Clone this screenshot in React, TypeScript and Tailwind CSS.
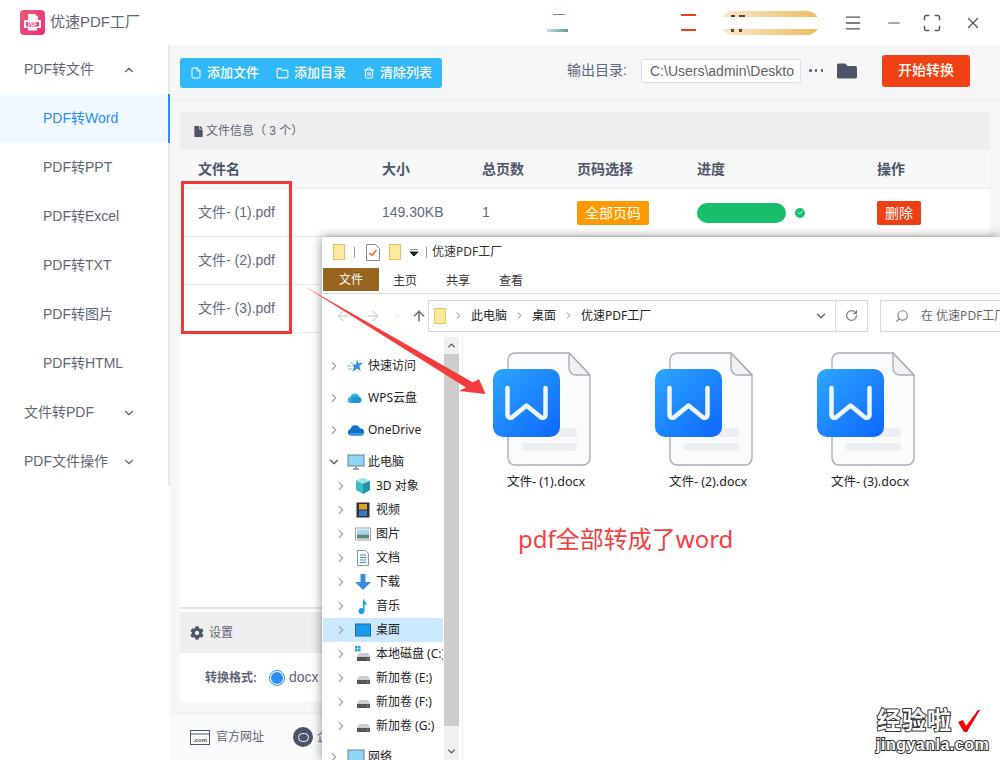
import React from 'react';
import { ChevronUp, ChevronDown, ChevronRight, Menu, Minus, Maximize, X, File, Folder, Trash2, Check, RotateCw, Search, ArrowLeft, ArrowRight, ArrowUp } from 'lucide-react';
import { FaCog, FaFile, FaFolder } from 'react-icons/fa';

const subMenu = ['PDF转Word', 'PDF转PPT', 'PDF转Excel', 'PDF转TXT', 'PDF转图片', 'PDF转HTML'];
const files = ['文件- (1).pdf', '文件- (2).pdf', '文件- (3).pdf'];
const docs = ['文件- (1).docx', '文件- (2).docx', '文件- (3).docx'];

const Logo = () => (
  <div className="w-[25px] h-[25px] rounded-[4px] bg-gradient-to-br from-[#f0566f] to-[#ea2d7f] flex items-center justify-center">
    <svg width="19" height="19" viewBox="0 0 19 19">
      <path d="M5 1h7l3 3v4H5z" fill="#fff" />
      <rect x="1" y="7" width="17" height="8" rx="1" fill="#fff" />
      <rect x="3" y="9" width="13" height="4.5" fill="#ee4378" />
      <rect x="5" y="15" width="9" height="2.5" fill="#fff" />
      <text x="9.5" y="12.8" fontSize="4.5" fontWeight="700" textAnchor="middle" fill="#fff">PDF</text>
    </svg>
  </div>
);

const Sidebar = () => (
  <aside className="w-[170px] shrink-0 bg-white">
    <div className="h-[441px] border-r-2 border-[#e6e8eb] text-[14px] text-[#5f6577]">
      <div className="h-[49px] pl-[24px] pr-[32px] flex items-center justify-between">
        <span>PDF转文件</span>
        <ChevronUp size={14} strokeWidth={2} />
      </div>
      {subMenu.map((m, i) => (
        <div
          key={m}
          className={
            i === 0
              ? 'h-[49px] pl-[43px] flex items-center bg-[#f0f9ff] text-[#2d8cf0] mr-[-2px] border-r-2 border-[#2d8cf0]'
              : 'h-[49px] pl-[43px] flex items-center'
          }
        >
          {m}
        </div>
      ))}
      {['文件转PDF', 'PDF文件操作'].map((m) => (
        <div key={m} className="h-[49px] pl-[24px] pr-[32px] flex items-center justify-between">
          <span>{m}</span>
          <ChevronDown size={14} strokeWidth={2} />
        </div>
      ))}
    </div>
  </aside>
);

const Header = () => (
  <header className="h-[45px] bg-white flex items-center pl-[20px]">
    <Logo />
    <span className="ml-[5px] text-[15px] text-[#5f6577] w-[497px]">优速PDF工厂</span>
    {/* 顶部被白条盖住的几个按钮 */}
    <div className="w-[21px] h-[18px] flex flex-col justify-between">
      <div className="h-[1px] w-[12px] ml-[6px] bg-[#5f9ea0]" />
      <div className="h-[3px] bg-gradient-to-r from-[#bfe0dc] to-[#5f9ea0]" />
    </div>
    <div className="ml-[113px] w-[15px] h-[17px] border-y-2 border-[#f04116]" />
    <div className="ml-[25px] w-[98px] h-[24px] rounded-full bg-gradient-to-r from-[#f8e8c8] to-[#edbc5a] flex flex-col justify-between overflow-hidden">
      <div className="h-[6px] pl-[10px] flex items-end gap-[4px]">
        <i className="w-[4px] h-[2px] bg-[#6b3a2a]" />
        <i className="w-[6px] h-[2px] bg-[#6b3a2a]" />
      </div>
      <div className="h-[12px] bg-white" />
      <div className="h-[6px] pl-[10px] flex items-start gap-[5px]">
        <i className="w-[3px] h-[3px] bg-[#6b3a2a]" />
        <i className="w-[3px] h-[3px] bg-[#6b3a2a]" />
      </div>
    </div>
    <Menu size={20} strokeWidth={1.6} className="ml-[24px] text-[#4d5468]" />
    <Minus size={18} strokeWidth={1.6} className="ml-[22px] text-[#4d5468]" />
    <Maximize size={20} strokeWidth={1.8} className="ml-[19px] text-[#4d5468]" />
    <X size={18} strokeWidth={1.6} className="ml-[22px] text-[#4d5468]" />
  </header>
);

const Toolbar = () => (
  <div className="h-[56px] pb-[4px] border-b border-[#e9ebee] flex items-center pl-[10px]">
    <div className="self-start mt-[13px] w-[262px] h-[30px] rounded-[3px] bg-[#30b8f8] flex items-center text-white text-[13px] font-medium">
      <span className="ml-[10px] flex items-center gap-[5px]"><File size={12} />添加文件</span>
      <span className="ml-[17px] flex items-center gap-[5px]"><Folder size={13} />添加目录</span>
      <span className="ml-[17px] flex items-center gap-[5px]"><Trash2 size={12} />清除列表</span>
    </div>
    <span className="ml-[125px] w-[74px] text-[14px] text-[#5f6577]">输出目录:</span>
    <div className="w-[160px] h-[24px] bg-white border border-[#dcdfe6] rounded-[2px] pl-[8px] text-[14px] leading-[22px] text-[#606266] overflow-hidden whitespace-nowrap">
      C:\Users\admin\Deskto
    </div>
    <div className="ml-[8px] w-[14px] flex justify-between">
      <i className="w-[2.5px] h-[2.5px] rounded-full bg-[#4d5468]" />
      <i className="w-[2.5px] h-[2.5px] rounded-full bg-[#4d5468]" />
      <i className="w-[2.5px] h-[2.5px] rounded-full bg-[#4d5468]" />
    </div>
    <FaFolder size={20} className="ml-[14px] text-[#4d5468]" />
    <button className="ml-[25px] w-[88px] h-[32px] rounded-[3px] bg-[#f04116] text-white text-[14px] font-medium">开始转换</button>
  </div>
);

const FileTable = () => (
  <div className="bg-white">
    <div className="h-[38px] bg-[#eeeeee] flex items-center pl-[13px] text-[12px] text-[#5f6577]">
      <FaFile size={11} className="text-[#4d5468] mr-[2px]" />
      文件信息（ 3 个）
    </div>
    <div className="h-[39px] bg-[#f7f8f9] border-b border-[#e9ebee] grid grid-cols-[184px_100px_95px_120px_180px_1fr] pl-[18px] items-center text-[14px] font-bold text-[#4d5468]">
      <span>文件名</span>
      <span>大小</span>
      <span>总页数</span>
      <span>页码选择</span>
      <span>进度</span>
      <span>操作</span>
    </div>
    {files.map((f, i) => (
      <div key={f} className="h-[48px] border-b border-[#e9ebee] grid grid-cols-[184px_100px_95px_120px_180px_1fr] pl-[18px] items-center text-[14px] text-[#606a7c]">
        <span>{f}</span>
        {/* 后两行其余的列都被窗口挡住了 */}
        {i === 0 && (
          <>
            <span>149.30KB</span>
            <span>1</span>
            <span className="w-[72px] h-[24px] rounded-[2px] bg-[#ff9900] text-white text-[14px] text-center leading-[24px]">全部页码</span>
            <span className="flex items-center gap-[9px]">
              <i className="w-[89px] h-[20px] rounded-full bg-[#19be6b]" />
              <i className="w-[10px] h-[10px] rounded-full bg-[#19be6b] flex items-center justify-center text-white">
                <Check size={7} strokeWidth={3} />
              </i>
            </span>
            <span className="w-[44px] h-[24px] rounded-[2px] bg-[#ed3f14] text-white text-center leading-[24px]">删除</span>
          </>
        )}
      </div>
    ))}
  </div>
);

const Settings = () => (
  <div>
    <div className="h-[276px] bg-white border-b-2 border-[#e4e4e4]" />
    <div className="h-[3px] bg-white" />
    <div className="h-[41px] bg-[#eeeeee] flex items-center pl-[10px] text-[12px] text-[#5f6577]">
      <FaCog size={14} className="text-[#4d5468] mr-[5px]" />
      设置
    </div>
    <div className="h-[49px] bg-white flex items-center pl-[25px] text-[13px] text-[#5f6577]">
      <span className="font-bold w-[64px] text-[12px]">转换格式:</span>
      <span className="w-[16px] h-[16px] rounded-full border border-[#2d8cf0] flex items-center justify-center">
        <i className="w-[12px] h-[12px] rounded-full bg-[#2d8cf0]" />
      </span>
      <span className="ml-[4px] text-[14px]">docx</span>
    </div>
  </div>
);

const Footer = () => (
  <div className="h-[47px] ml-[-10px] mt-[11px] border-t border-[#e9ebee] bg-[#f9fafb] flex items-center pl-[20px] text-[12px] text-[#5f6577] whitespace-nowrap">
    <svg width="20" height="15" viewBox="0 0 20 15" className="text-[#4d5468]">
      <rect x="0.5" y="0.5" width="19" height="14" fill="none" stroke="currentColor" />
      <path d="M0.5 4h19" stroke="currentColor" />
      <text x="10" y="11.5" fontSize="6" fontWeight="700" textAnchor="middle" fill="currentColor">.com</text>
    </svg>
    <span className="ml-[6px]">官方网址</span>
    <span className="ml-[29px] w-[20px] h-[20px] rounded-full bg-[#4d5468] flex items-center justify-center">
      <span className="w-[11px] h-[9px] rounded-full border border-white" />
    </span>
    <span className="ml-[4px]">企业QQ</span>
  </div>
);

const WordFile = ({ name }: { name: string }) => (
  <div className="w-[162px] flex flex-col items-center">
    <svg width="105" height="118" viewBox="490 350 105 118" className="mr-[8px]">
      <defs>
        <linearGradient id="wordBlue" x1="0" y1="0" x2="1" y2="1">
          <stop offset="0" stopColor="#2ea6ff" />
          <stop offset="1" stopColor="#0d66fb" />
        </linearGradient>
      </defs>
      <path d="M515 353h54l21 22v83a7 7 0 0 1-7 7h-68a7 7 0 0 1-7-7v-98a7 7 0 0 1 7-7z" fill="#fafbfd" stroke="#a9adb8" strokeWidth="1.4" />
      <path d="M569 353v15a7 7 0 0 0 7 7h14z" fill="#f0f1f4" stroke="#a9adb8" strokeWidth="1.4" strokeLinejoin="round" />
      <rect x="555" y="428" width="22" height="9" rx="2" fill="#eceef1" />
      <rect x="522" y="443" width="55" height="7.5" rx="2" fill="#eceef1" />
      <rect x="493" y="369" width="67" height="68" rx="10" fill="url(#wordBlue)" />
      <path d="M507.5 388v27a3 3 0 0 0 5 2l14-11.5 14 11.5a3 3 0 0 0 5-2v-27" fill="none" stroke="#fff" strokeWidth="4.5" strokeLinecap="round" strokeLinejoin="round" opacity="0.92" />
    </svg>
    <span className="mt-[5px] text-[12.5px] text-[#222]">{name}</span>
  </div>
);

const NavIcon = ({ kind }: { kind: string }) => {
  switch (kind) {
    case 'star':
      return <svg width="16" height="16" viewBox="0 0 16 16"><path d="M10 1l1.200 4H16l-3.600 3 1.300 5L10 10.500 5.500 14l1.500-5-2-2.500h4z" fill="#2f8fe8" /><path d="M0 8h4M1 11h4M3 5h3" stroke="#7cc0f2" /></svg>;
    case 'wps':
      return <svg width="16" height="16" viewBox="0 0 16 16"><path d="M4 13a3 3 0 0 1-.6-6A4.500 4.500 0 0 1 12 6.500 3.300 3.300 0 0 1 12 13z" fill="#35b6e6" /><path d="M7 13a3 3 0 0 1 0-6 4 4 0 0 1 5 0 3.300 3.300 0 0 1 0 6z" fill="#1f93d8" /></svg>;
    case 'one':
      return <svg width="18" height="16" viewBox="0 0 18 16"><path d="M4 13.500a3.300 3.300 0 0 1-.5-6.500A5 5 0 0 1 13 6.500a3.500 3.500 0 0 1 1 7z" fill="#0f6fc6" /><path d="M3 11h13v1a2 2 0 0 1-2 1.500H4A3 3 0 0 1 3 11z" fill="#2a9be8" /></svg>;
    case 'pc':
      return <svg width="18" height="16" viewBox="0 0 18 16"><rect x="1" y="1" width="16" height="11" fill="#8fd4f5" stroke="#6d8296" /><path d="M6 15h6M9 12v3" stroke="#7f93a6" strokeWidth="1.5" /></svg>;
    case 'cube':
      return <svg width="16" height="16" viewBox="0 0 16 16"><path d="M8 0l7 3v9l-7 4-7-4V3z" fill="#3fb8c8" /><path d="M8 0l7 3-7 3-7-3z" fill="#9fe3ea" /><path d="M8 6l7-3v9l-7 4z" fill="#1e95a8" /></svg>;
    case 'film':
      return <svg width="16" height="16" viewBox="0 0 16 16"><rect x="1.500" y="0.500" width="13" height="15" fill="#333" /><rect x="4" y="2" width="8" height="5.500" fill="#e0a030" /><rect x="4" y="8.500" width="8" height="5.500" fill="#3d78c8" /></svg>;
    case 'pic':
      return <svg width="16" height="16" viewBox="0 0 16 16"><rect x="0.500" y="2" width="15" height="12" fill="#fff" stroke="#9aa0a6" /><rect x="2" y="3.500" width="12" height="5" fill="#a8d4e8" /><rect x="2" y="8.500" width="12" height="4" fill="#5a8a78" /></svg>;
    case 'doc':
      return <svg width="16" height="16" viewBox="0 0 16 16"><path d="M2.500.5h8l3 3v12h-11z" fill="#fff" stroke="#8a97a3" /><path d="M5 5h6M5 7.500h6M5 10h6M5 12.500h6" stroke="#3d8bc8" /></svg>;
    case 'down':
      return <svg width="16" height="16" viewBox="0 0 16 16"><path d="M5.500 0h5v8H16l-8 8-8-8h5.500z" fill="#3d8bd8" /></svg>;
    case 'note':
      return <svg width="16" height="16" viewBox="0 0 16 16"><path d="M8 0c.5 3 4.500 4 3.500 8C11 7 10 6.500 9.500 6v7a3 3 0 1 1-1.500-2.500z" fill="#1e9be8" /></svg>;
    case 'desk':
      return <svg width="16" height="16" viewBox="0 0 16 16"><rect x="0.500" y="2" width="15" height="12" fill="#1e9be8" stroke="#0f6fb0" /></svg>;
    case 'sys':
      return <svg width="16" height="16" viewBox="0 0 16 16"><rect x="0" y="0" width="2.500" height="2.500" fill="#1ea7e8" /><rect x="3" y="0" width="2.500" height="2.500" fill="#1ea7e8" /><rect x="0" y="3" width="2.500" height="2.500" fill="#1ea7e8" /><rect x="3" y="3" width="2.500" height="2.500" fill="#1ea7e8" /><path d="M4 7h9l2 4H2z" fill="#c8ccd0" /><rect x="2" y="11" width="13" height="4" fill="#555" /><rect x="12" y="12.500" width="1.500" height="1" fill="#5fe05f" /></svg>;
    default:
      return <svg width="16" height="16" viewBox="0 0 16 16"><path d="M4 6h9l2 4H2z" fill="#c8ccd0" /><rect x="2" y="10" width="13" height="4" fill="#555" /><rect x="12" y="11.500" width="1.500" height="1" fill="#5fe05f" /></svg>;
  }
};

const tree = [
  { label: '快速访问', icon: 'star', top: true, gap: true },
  { label: 'WPS云盘', icon: 'wps', top: true, gap: true },
  { label: 'OneDrive', icon: 'one', top: true, gap: true },
  { label: '此电脑', icon: 'pc', top: true, open: true },
  { label: '3D 对象', icon: 'cube' },
  { label: '视频', icon: 'film' },
  { label: '图片', icon: 'pic' },
  { label: '文档', icon: 'doc' },
  { label: '下载', icon: 'down' },
  { label: '音乐', icon: 'note' },
  { label: '桌面', icon: 'desk', selected: true },
  { label: '本地磁盘 (C:)', icon: 'sys' },
  { label: '新加卷 (E:)', icon: 'disk' },
  { label: '新加卷 (F:)', icon: 'disk' },
  { label: '新加卷 (G:)', icon: 'disk' },
];

const SmallFolder = () => (
  <i className="block w-[12px] h-[16px] bg-[#fde9a0] border border-[#e6c35c]" />
);

const NavTree = () => (
  <div className="w-[120px] shrink-0 pt-[17px] overflow-hidden text-[12px] text-[#222]">
    {tree.map((t) => (
      <div
        key={t.label}
        className={
          (t.selected ? 'bg-[#cce8ff] ' : '') +
          (t.gap ? 'mb-[8px] ' : '') +
          (t.top ? 'pl-[4px] ' : 'pl-[11px] ') +
          'h-[24px] flex items-center whitespace-nowrap'
        }
      >
        {t.open ? (
          <ChevronDown size={14} className="text-[#555] shrink-0" />
        ) : (
          <ChevronRight size={14} className="text-[#a6a6a6] shrink-0" />
        )}
        <span className={t.top ? 'ml-[6px] w-[21px] shrink-0' : 'ml-[7px] w-[21px] shrink-0'}>
          <NavIcon kind={t.icon} />
        </span>
        <span>{t.label}</span>
      </div>
    ))}
    <div className="h-[24px] mt-[7px] pl-[4px] flex items-center whitespace-nowrap">
      <ChevronRight size={14} className="text-[#a6a6a6] shrink-0" />
      <span className="ml-[6px] w-[21px] shrink-0"><NavIcon kind="pc" /></span>
      <span>网络</span>
    </div>
  </div>
);

const Explorer = () => (
  <div className="absolute left-[322px] top-[237px] w-[678px] h-[523px] bg-white shadow-[0_0_10px_rgba(0,0,0,0.45)] pl-[1px] flex flex-col overflow-hidden [font-family:'Noto_Sans','Noto_Sans_CJK_SC',sans-serif]">
    <div className="h-[30px] shrink-0 flex items-center pl-[10px] text-[12px] text-[#333]">
      <SmallFolder />
      <i className="ml-[9px] w-[1px] h-[11px] bg-[#999]" />
      <svg width="14" height="17" viewBox="0 0 14 17" className="ml-[11px]">
        <path d="M.5.5h9l4 4v12H.5z" fill="#fff" stroke="#888" />
        <path d="M3.500 9l2.500 2.500L10.500 6" fill="none" stroke="#e8622c" strokeWidth="1.500" />
      </svg>
      <span className="ml-[9px]"><SmallFolder /></span>
      <svg width="8" height="7" viewBox="0 0 8 7" className="ml-[9px]">
        <path d="M0 0h8M0 3h8L4 7z" stroke="#222" fill="#222" />
      </svg>
      <i className="ml-[8px] w-[1px] h-[11px] bg-[#999]" />
      <span className="ml-[5px]">优速PDF工厂</span>
    </div>
    <div className="h-[27px] shrink-0 flex items-start border-b border-[#d9d9d9] text-[12px] text-[#333]">
      <span className="w-[56px] h-[23px] mt-[1px] bg-[#996320] text-white text-center leading-[23px]">文件</span>
      <span className="ml-[14px] w-[24px] mt-[1px] leading-[25px]">主页</span>
      <span className="ml-[29px] w-[24px] mt-[1px] leading-[25px]">共享</span>
      <span className="ml-[29px] w-[24px] mt-[1px] leading-[25px]">查看</span>
    </div>
    <div className="h-[43px] shrink-0 flex items-center text-[12px] text-[#222]">
      <ArrowLeft size={16} className="ml-[12px] text-[#d5d5d5]" />
      <ArrowRight size={16} className="ml-[14px] text-[#d5d5d5]" />
      <ChevronDown size={10} className="ml-[11px] text-[#d5d5d5]" />
      <ArrowUp size={16} strokeWidth={2.4} className="ml-[9px] text-[#777]" />
      <div className="ml-[1px] w-[408px] h-[32px] border border-[#d9d9d9] flex items-center pl-[5px]">
        <SmallFolder />
        <ChevronRight size={11} className="ml-[7px] text-[#777]" />
        <span className="ml-[7px] w-[36px]">此电脑</span>
        <ChevronRight size={11} className="ml-[7px] text-[#777]" />
        <span className="ml-[7px] w-[24px]">桌面</span>
        <ChevronRight size={11} className="ml-[7px] text-[#777]" />
        <span className="ml-[7px]">优速PDF工厂</span>
        <ChevronDown size={14} strokeWidth={2.4} className="ml-auto mr-[7px] text-[#666]" />
      </div>
      <div className="w-[32px] h-[32px] border border-l-0 border-[#d9d9d9] flex items-center justify-center">
        <RotateCw size={13} strokeWidth={2.2} className="text-[#777]" />
      </div>
      <div className="ml-[12px] flex-1 h-[32px] border border-r-0 border-[#d9d9d9] flex items-center pl-[14px] text-[#666] whitespace-nowrap overflow-hidden">
        <Search size={14} className="text-[#888] -scale-x-100 shrink-0" />
        <span className="ml-[12px]">在 优速PDF工厂</span>
      </div>
    </div>
    <div className="flex-1 flex min-h-0">
      <NavTree />
      <div className="ml-[1px] w-[15px] shrink-0 bg-[#f0f0f0] flex flex-col">
        <div className="h-[17px] flex items-center justify-center"><ChevronUp size={11} strokeWidth={3} className="text-[#555]" /></div>
        <div className="h-[372px] bg-[#cdcdcd]" />
        <div className="flex-1 flex items-end justify-center pb-[3px]"><ChevronDown size={11} strokeWidth={3} className="text-[#555]" /></div>
      </div>
      <div className="ml-[3px] flex-1 border-l border-[#eeeeee] pl-[2px] pt-[13px]">
        <div className="flex">
          {docs.map((d) => (
            <WordFile key={d} name={d} />
          ))}
        </div>
        <p className="ml-[53px] mt-[28px] text-[24px] leading-[38px] text-[#f33f3f]">pdf全部转成了word</p>
      </div>
    </div>
  </div>
);

const Arrow = () => (
  <svg className="absolute left-[300px] top-[280px] pointer-events-none" width="195" height="120" viewBox="300 280 195 120">
    <path d="M304 286L473 382.500 479 379 485.500 394 459 391 466 387.500z" fill="#f43c3c" />
  </svg>
);

const Watermark = () => (
  <div className="absolute left-[877px] top-[706px] w-[120px] text-white font-bold [-webkit-text-stroke:2px_#333] [paint-order:stroke_fill] [font-family:'Liberation_Sans','Noto_Sans_CJK_SC',sans-serif]">
    <div className="text-[24px] leading-[30px] tracking-[1px] flex items-center">
      经验啦
      <svg width="24" height="24" viewBox="0 0 24 24" className="ml-[5px]">
        <path d="M1 13l5-2 3 6L21 1h2L10 23H7z" fill="#f40000" />
      </svg>
    </div>
    <div className="text-[16px] leading-[18px] tracking-[0.5px] ml-[-1px]">jingyanla.com</div>
  </div>
);

export default function App() {
  return (
    <div className="relative w-[1000px] h-[760px] overflow-hidden bg-white [font-family:'Liberation_Sans','Noto_Sans_CJK_SC',sans-serif]">
      <Header />
      <div className="flex h-[715px]">
        <Sidebar />
        <main className="flex-1 bg-[#f5f6f8] flex flex-col">
          <Toolbar />
          <div className="mt-[11px] mx-[10px] flex flex-col">
            <FileTable />
            <Settings />
            <Footer />
          </div>
        </main>
      </div>
      {/* 红框、箭头和资源管理器窗口是盖在软件界面上面的 */}
      <div className="absolute left-[181px] top-[181px] w-[111px] h-[153px] border-[3px] border-[#f33737]" />
      <Explorer />
      <Arrow />
      <Watermark />
    </div>
  );
}
